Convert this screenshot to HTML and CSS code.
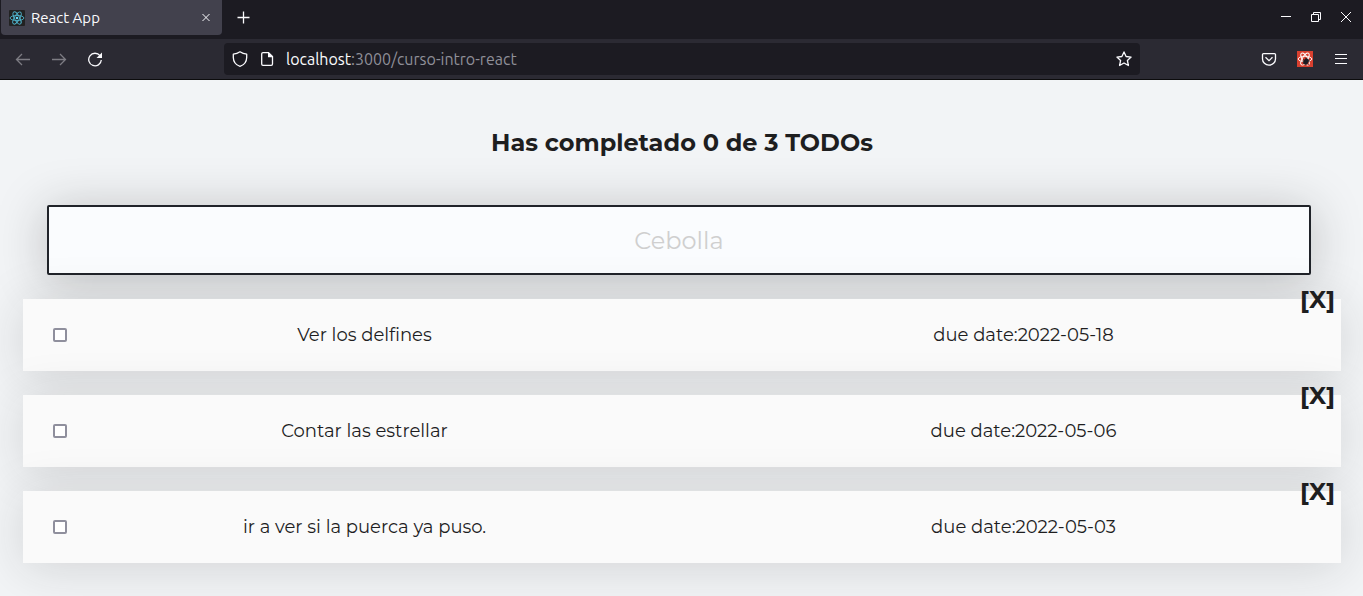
FILE: index.html
```html
<!DOCTYPE html>
<html lang="es">
<head>
<meta charset="utf-8">
<meta name="viewport" content="width=device-width, initial-scale=1">
<title>React App</title>
<link rel="stylesheet" href="styles.css">
</head>
<body>
<header class="browser">
  <div class="tab-bar">
    <div class="tab">
      <svg class="icon" viewBox="0 0 16 16"><rect width="16" height="16" rx="1" fill="#222" stroke="none"/><g fill="none" stroke="#4fb3cb" stroke-width=".9"><ellipse cx="8" cy="8" rx="6.9" ry="2.6"/><ellipse cx="8" cy="8" rx="6.9" ry="2.6" transform="rotate(60 8 8)"/><ellipse cx="8" cy="8" rx="6.9" ry="2.6" transform="rotate(120 8 8)"/></g><circle cx="8" cy="8" r="1.3" fill="#61dafb" stroke="none"/></svg>
      <span class="tab-title">React App</span>
      <button class="icon-button" aria-label="Close tab"><svg class="icon" viewBox="0 0 16 16"><path d="M4.500 4l7 7m0-7l-7 7"/></svg></button>
    </div>
    <button class="icon-button new-tab" aria-label="New tab"><svg class="icon bold" viewBox="0 0 16 16"><path d="M7.500 1.500v12M1.500 7.500h12"/></svg></button>
    <div class="window-controls">
      <button class="icon-button" aria-label="Minimize"><svg class="icon" viewBox="0 0 16 16"><path d="M3 6.500h10"/></svg></button>
      <button class="icon-button" aria-label="Restore"><svg class="icon" viewBox="0 0 16 16"><path d="M3.500 4.500h7v7h-7zM5.500 4.500v-2h7v7h-2"/></svg></button>
      <button class="icon-button" aria-label="Close window"><svg class="icon" viewBox="0 0 16 16"><path d="M3 2l10 10m0-10l-10 10"/></svg></button>
    </div>
  </div>
  <nav class="toolbar">
    <div class="history">
      <button class="icon-button dim" aria-label="Back"><svg class="icon bold" viewBox="0 0 16 16"><path d="M15 8.500H1.500M7 3L1.500 8.500L7 14"/></svg></button>
      <button class="icon-button dim" aria-label="Forward"><svg class="icon bold" viewBox="0 0 16 16"><path d="M1 8.500h13.500M9 3l5.500 5.500L9 14"/></svg></button>
      <button class="icon-button" aria-label="Reload"><svg class="icon bold" viewBox="0 0 16 16"><path d="M13 4.700A6.300 6.300 0 1 0 14.300 9"/><path d="M15 1.500v5.500H9.500z" fill="currentColor" stroke="none"/></svg></button>
    </div>
    <div class="address-bar">
      <svg class="icon bold" viewBox="0 0 16 16"><path stroke-linejoin="round" d="M8 .8C6 2.200 3.500 3 1.300 3.200V6.500C1.400 10.500 4 14 8 15.300C12 14 14.600 10.500 14.700 6.500V3.200C12.500 3 10 2.200 8 .8z"/></svg>
      <svg class="icon bold" viewBox="0 0 16 16"><path d="M4 1.600h5.500l4 4v7.500a1.300 1.300 0 0 1-1.300 1.300H4a1.300 1.300 0 0 1-1.300-1.300V2.900A1.300 1.300 0 0 1 4 1.600z"/><path d="M9 1.200v5h5z" fill="currentColor" stroke="none"/></svg>
      <span class="url"><b>localhost</b>:3000/curso-intro-react</span>
      <button class="icon-button" aria-label="Bookmark"><svg class="icon bold" viewBox="0 0 16 16"><path stroke-linejoin="round" d="M8 .9l2.100 4.600 5 .6-3.700 3.400 1 5L8 12l-4.400 2.500 1-5L.9 6.100l5-.6z"/></svg></button>
    </div>
    <div class="actions">
      <button class="icon-button" aria-label="Pocket"><svg class="icon bold" viewBox="0 0 16 16"><path stroke-linejoin="round" d="M2.500 2.600h11a1 1 0 0 1 1 1V8a6.500 6.100 0 0 1-13 0V3.600a1 1 0 0 1 1-1z"/><path d="M4.500 6.300L8 9.600l3.500-3.300"/></svg></button>
      <button class="icon-button" aria-label="React Developer Tools"><svg class="icon" viewBox="0 0 16 16"><rect width="16" height="16" fill="#d9402f" stroke="none"/><g stroke="#fff" stroke-width=".9"><ellipse cx="8" cy="8" rx="6.800" ry="2.700"/><ellipse cx="8" cy="8" rx="6.800" ry="2.700" transform="rotate(60 8 8)"/><ellipse cx="8" cy="8" rx="6.800" ry="2.700" transform="rotate(120 8 8)"/></g><g stroke="#1c1b22" stroke-width=".6"><ellipse cx="9" cy="10.500" rx="2.300" ry="3" transform="rotate(35 9 10.500)" fill="#1c1b22"/><path d="M6 8l6 6M12.500 8.500L6 12.500M9 6.500v8M5.500 10h7.500"/></g></svg></button>
      <button class="icon-button" aria-label="Menu"><svg class="icon" viewBox="0 0 16 16"><path d="M2 3.500h12M2 7.500h12M2 12.500h12"/></svg></button>
    </div>
  </nav>
</header>
<main class="app">
  <h1 class="counter">Has completado 0 de 3 TODOs</h1>
  <input class="search" type="text" placeholder="Cebolla" aria-label="Cebolla">
  <ul class="todo-list">
    <li class="todo">
      <input class="check" type="checkbox" id="todo-1">
      <label class="text" for="todo-1">Ver los delfines</label>
      <p class="text">due date:2022-05-18</p>
      <button class="delete">[X]</button>
    </li>
    <li class="todo">
      <input class="check" type="checkbox" id="todo-2">
      <label class="text" for="todo-2">Contar las estrellar</label>
      <p class="text">due date:2022-05-06</p>
      <button class="delete">[X]</button>
    </li>
    <li class="todo">
      <input class="check" type="checkbox" id="todo-3">
      <label class="text" for="todo-3">ir a ver si la puerca ya puso.</label>
      <p class="text">due date:2022-05-03</p>
      <button class="delete">[X]</button>
    </li>
  </ul>
</main>
</body>
</html>
```
FILE: styles.css
```css
* {
  box-sizing: border-box;
}

body {
  display: flex;
  flex-direction: column;
  min-height: 100vh;
  margin: 0;
  background: #f2f4f6;
  color: #1e1e1f;
  font-family: Montserrat, Inter, sans-serif;
}

button {
  padding: 0;
  border: 0;
  background: none;
  color: inherit;
  font: inherit;
  cursor: pointer;
}

/* Browser frame */
.browser {
  background: #1c1b22;
  color: #fbfbfe;
  font-family: Ubuntu, "Noto Sans", sans-serif;
  font-size: 15px;
}

.tab-bar,
.toolbar,
.tab,
.history,
.address-bar,
.actions,
.window-controls {
  display: flex;
  align-items: center;
}

.tab-bar {
  height: 39px;
  padding: 0 9px 4px 1px;
}

.tab {
  width: 221px;
  height: 35px;
  gap: 6px;
  padding: 0 8px;
  border-radius: 0 0 4px 4px;
  background: #42414d;
}

.tab-title {
  flex: 1;
}

.icon {
  display: block;
  flex: none;
  width: 16px;
  height: 16px;
  fill: none;
  stroke: currentColor;
  stroke-width: 1;
}

.bold {
  stroke-width: 1.3;
}

.new-tab {
  margin-left: 14px;
}

.window-controls {
  gap: 14px;
  margin-left: auto;
}

.toolbar {
  justify-content: space-between;
  height: 41px;
  padding: 0 14px 0 15px;
  border-bottom: 1px solid #0c0c0d;
  background: #2b2a33;
}

.history {
  gap: 20px;
}

.actions {
  gap: 20px;
}

.dim {
  color: #7d7c83;
}

.address-bar {
  width: 916px;
  height: 32px;
  gap: 11px;
  margin-right: auto;
  margin-left: 121px;
  padding: 0 8px;
  border-radius: 4px;
  background: #1c1b22;
}

.url {
  flex: 1;
  color: #8f8f98;
  font-size: 16px;
}

.url b {
  color: #fbfbfe;
  font-weight: 400;
}

/* Todo page */
.app {
  flex: 1;
  padding: 48px 22px 32px 23px;
  overflow: hidden;
}

.counter {
  margin: 0 0 48px;
  font-size: 24px;
  font-weight: 700;
  line-height: 29px;
  text-align: center;
}

.search {
  display: block;
  width: calc(100% - 54px);
  height: 70px;
  margin: 0 24px;
  padding: 0 24px;
  border: 2px solid #202329;
  border-radius: 2px;
  background: #fafcfe;
  box-shadow: 0 5px 50px rgba(32, 32, 32, 0.25);
  color: #1e1e1f;
  font: 400 24px Montserrat, Inter, sans-serif;
  text-align: center;
}

.search::placeholder {
  color: #cfcfcf;
}

.todo-list {
  display: grid;
  gap: 24px;
  margin: 24px 0 0;
  padding: 0;
  list-style: none;
}

.todo {
  position: relative;
  display: flex;
  align-items: center;
  height: 72px;
  padding: 0 20px 0 30px;
  background: #fafafa;
  box-shadow: 0 5px 50px rgba(32, 32, 32, 0.15);
}

.check {
  appearance: none;
  flex: none;
  width: 14px;
  height: 14px;
  margin: 0;
  border: 2px solid #8f8f9d;
  border-radius: 2px;
  background: #fff;
}

.text {
  flex: 1;
  margin: 0;
  font-size: 18px;
  line-height: 24px;
  text-align: center;
}

.text + .text {
  margin-left: 64px;
}

.delete {
  position: absolute;
  top: -13px;
  right: 6px;
  font-size: 24px;
  font-weight: 700;
  line-height: 28px;
}
```
